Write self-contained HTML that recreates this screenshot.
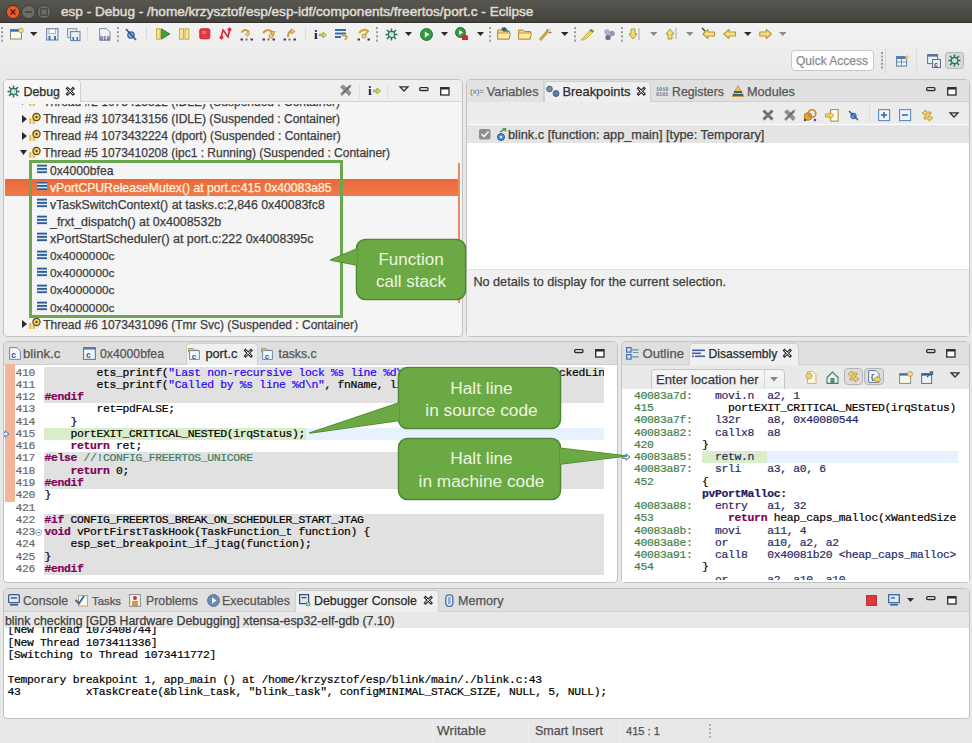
<!DOCTYPE html><html><head><meta charset="utf-8"><style>
html,body{margin:0;padding:0}
body{width:972px;height:743px;overflow:hidden;position:relative;background:#e8e8e8;font-family:"Liberation Sans",sans-serif}
.a{position:absolute;box-sizing:border-box}
.t{position:absolute;white-space:pre;font-family:"Liberation Sans",sans-serif;-webkit-text-stroke:0.25px currentColor}
.m{position:absolute;white-space:pre;font-family:"Liberation Mono",monospace;-webkit-text-stroke:0.2px currentColor}
.k{color:#7f0055;font-weight:bold}
.s{color:#2a00ff}
.cm{color:#3f7f5f}
svg{overflow:visible}
</style></head><body>
<div class="a" style="left:0px;top:0px;width:972px;height:23px;background:linear-gradient(#57564f,#4a4944 70%,#43423d);border-bottom:1px solid #33322e"></div>
<svg class="a" style="left:5px;top:4px" width="50" height="16" viewBox="0 0 50 16">
<circle cx="8" cy="8" r="6.6" fill="#e9592c" stroke="#3a2a20" stroke-width="0.8"/>
<path d="M5.6 5.6L10.4 10.4M10.4 5.6L5.6 10.4" stroke="#5a1a08" stroke-width="1.4"/>
<circle cx="23.5" cy="8" r="6.6" fill="#6e6c67" stroke="#3a3935" stroke-width="0.8"/>
<rect x="20" y="7.3" width="7" height="1.6" fill="#4a4843"/>
<circle cx="39" cy="8" r="6.6" fill="#6e6c67" stroke="#3a3935" stroke-width="0.8"/>
<rect x="35.8" y="4.8" width="6.4" height="6.4" fill="none" stroke="#4a4843" stroke-width="1.4"/>
</svg>
<div class="t" style="left:61px;top:4.00px;line-height:16px;font-size:13.58px;color:#dfdbd2;-webkit-text-stroke:0.5px #dfdbd2">esp - Debug - /home/krzysztof/esp/esp-idf/components/freertos/port.c - Eclipse</div>
<div class="a" style="left:0px;top:23px;width:972px;height:56px;background:linear-gradient(#f2f2f2,#ececec 60%,#e8e8e8)"></div>
<svg class="a" style="left:1px;top:27px" width="2" height="17" viewBox="0 0 2 17"><rect x="0" y="0.0" width="2" height="2" fill="#9a9a9a"/><rect x="0" y="4.2" width="2" height="2" fill="#9a9a9a"/><rect x="0" y="8.4" width="2" height="2" fill="#9a9a9a"/><rect x="0" y="12.6" width="2" height="2" fill="#9a9a9a"/></svg>
<svg class="a" style="left:10px;top:28px" width="14" height="12" viewBox="0 0 14 12"><rect x="0.5" y="1.5" width="11" height="9.5" fill="#fbf8ea" stroke="#8a8a80" stroke-width="1"/><rect x="0.5" y="1.5" width="11" height="2.2" fill="#3a6fb0"/><circle cx="11" cy="2.5" r="2.3" fill="#f5e08a" stroke="#b09a40" stroke-width="0.8"/></svg>
<svg class="a" style="left:30px;top:32px" width="7.5" height="4" viewBox="0 0 7.5 4"><path d="M0 0H7.5L3.75 4Z" fill="#2a2a2a"/></svg>
<svg class="a" style="left:46px;top:27.5px" width="13" height="13" viewBox="0 0 13 13"><rect x="0.6" y="0.6" width="11.4" height="11.4" fill="#e6eef8" stroke="#6f86a8" stroke-width="1.1"/><rect x="3" y="1" width="6.5" height="4.5" fill="#fff" stroke="#8aa0c0" stroke-width="0.8"/><rect x="2.5" y="8" width="2" height="4" fill="#4f6f9f"/><rect x="8" y="8" width="2" height="4" fill="#4f6f9f"/></svg>
<svg class="a" style="left:67px;top:27.5px" width="14" height="13" viewBox="0 0 14 13"><rect x="0.6" y="0.6" width="9" height="9" fill="#e0e6ee" stroke="#8a98ae" stroke-width="1"/><rect x="3.6" y="3.6" width="9.4" height="9" fill="#e6eef8" stroke="#6f86a8" stroke-width="1.1"/><rect x="5.5" y="9" width="1.6" height="3.5" fill="#4f6f9f"/><rect x="9.5" y="9" width="1.6" height="3.5" fill="#4f6f9f"/></svg>
<div class="a" style="left:87px;top:27px;width:1px;height:14px;background:#dcdcdc"></div>
<svg class="a" style="left:99px;top:27.5px" width="12" height="13" viewBox="0 0 12 13"><path d="M0.6 0.6H7.5L11 4V12.4H0.6Z" fill="#eef3fa" stroke="#7f90a8" stroke-width="1"/><text x="0.8" y="11.5" font-family="Liberation Mono" font-size="5.5" font-weight="bold" fill="#2f4f7f">010</text></svg>
<svg class="a" style="left:117px;top:27px" width="2" height="17" viewBox="0 0 2 17"><rect x="0" y="0.0" width="2" height="2" fill="#9a9a9a"/><rect x="0" y="4.2" width="2" height="2" fill="#9a9a9a"/><rect x="0" y="8.4" width="2" height="2" fill="#9a9a9a"/><rect x="0" y="12.6" width="2" height="2" fill="#9a9a9a"/></svg>
<svg class="a" style="left:125px;top:27.5px" width="12" height="13" viewBox="0 0 12 13"><circle cx="6" cy="7" r="3.2" fill="#8fb0d8" stroke="#3a64a0" stroke-width="1.3"/><path d="M1 1L11 12" stroke="#2a5a9a" stroke-width="1.6"/></svg>
<div class="a" style="left:145.5px;top:27px;width:1px;height:14px;background:#dcdcdc"></div>
<svg class="a" style="left:156px;top:28px" width="15" height="12" viewBox="0 0 15 12"><rect x="0.6" y="0.8" width="3.6" height="10.4" fill="#f5e9a0" stroke="#c9a83a" stroke-width="1"/><path d="M5.5 0.8L14 6L5.5 11.2Z" fill="#3fa040" stroke="#2a7a30" stroke-width="0.8"/></svg>
<svg class="a" style="left:179px;top:28px" width="11" height="12" viewBox="0 0 11 12"><rect x="0.6" y="0.8" width="3.8" height="10.4" fill="#f5e9a0" stroke="#c9a83a" stroke-width="1"/><rect x="6" y="0.8" width="3.8" height="10.4" fill="#f5e9a0" stroke="#c9a83a" stroke-width="1"/></svg>
<svg class="a" style="left:199px;top:28px" width="12" height="12" viewBox="0 0 12 12"><rect x="0.8" y="0.8" width="10" height="10" rx="1.5" fill="#e03a3e" stroke="#c02a2e" stroke-width="1"/><rect x="3" y="3" width="4" height="3" fill="#f06a6e"/></svg>
<svg class="a" style="left:219px;top:27px" width="13" height="13" viewBox="0 0 13 13"><path d="M2 11L4 3L9 10L11 2" fill="none" stroke="#c8283a" stroke-width="1.6"/><circle cx="2.5" cy="10.5" r="2" fill="#d83848"/><circle cx="10.5" cy="2.5" r="2" fill="#d83848"/><circle cx="4.5" cy="4" r="1.3" fill="#d83848"/></svg>
<svg class="a" style="left:240px;top:28px" width="14" height="13" viewBox="0 0 14 13"><path d="M1.5 4.5Q5 0 8.5 3.5L7 6.5" fill="none" stroke="#c8a040" stroke-width="2"/><path d="M5 5.5L7.5 8.5L10 5" fill="#f0d070" stroke="#b08a30" stroke-width="0.8"/><rect x="0.5" y="10.5" width="2.5" height="2" fill="#404040"/><rect x="10.5" y="10.5" width="2.5" height="2" fill="#404040"/><rect x="5.5" y="10.5" width="2" height="2" fill="#707070"/></svg>
<svg class="a" style="left:262px;top:28px" width="14" height="13" viewBox="0 0 14 13"><path d="M1 5Q6 -1 11 5" fill="none" stroke="#c8a040" stroke-width="2"/><path d="M8.5 4L11 7.5L13 3.5Z" fill="#f0d070" stroke="#b08a30" stroke-width="0.8"/><circle cx="9" cy="8" r="2" fill="#f0d070" stroke="#b08a30" stroke-width="0.8"/><rect x="0.5" y="10.5" width="2.5" height="2" fill="#404040"/><rect x="10.5" y="10.5" width="2.5" height="2" fill="#404040"/><rect x="5.5" y="10.5" width="2" height="2" fill="#707070"/></svg>
<svg class="a" style="left:283px;top:28px" width="14" height="13" viewBox="0 0 14 13"><path d="M5 9Q5 3 9 3" fill="none" stroke="#c8a040" stroke-width="2"/><path d="M8 1L12 3.5L8 6Z" fill="#f0d070" stroke="#b08a30" stroke-width="0.8"/><rect x="0.5" y="10.5" width="2.5" height="2" fill="#404040"/><rect x="10.5" y="10.5" width="2.5" height="2" fill="#404040"/><rect x="5.5" y="10.5" width="2" height="2" fill="#707070"/></svg>
<div class="a" style="left:305px;top:27px;width:1px;height:14px;background:#dcdcdc"></div>
<svg class="a" style="left:314px;top:28px" width="13" height="12" viewBox="0 0 13 12"><text x="0" y="11" font-family="Liberation Serif" font-size="13" font-weight="bold" fill="#101030">i</text><path d="M5.5 6H9V4L12.5 7L9 10V8H5.5Z" fill="#e8d040" stroke="#8a9a30" stroke-width="0.7"/></svg>
<svg class="a" style="left:335px;top:28px" width="14" height="13" viewBox="0 0 14 13"><rect x="0" y="1" width="11" height="2" fill="#3a6ab0"/><rect x="0" y="4.5" width="11" height="2" fill="#3a6ab0"/><rect x="0" y="8" width="6" height="2" fill="#3a6ab0"/><path d="M7 8Q10 6 12 9L10 12" fill="none" stroke="#d0a838" stroke-width="2"/></svg>
<svg class="a" style="left:357px;top:28px" width="14" height="13" viewBox="0 0 14 13"><path d="M2 5Q6 0 11 3L8 7" fill="none" stroke="#d0a838" stroke-width="2"/><circle cx="7" cy="8" r="2" fill="#f0d070" stroke="#b08a30" stroke-width="0.8"/><rect x="0.5" y="10.5" width="2.5" height="2" fill="#404040"/><rect x="10.5" y="10.5" width="2.5" height="2" fill="#404040"/></svg>
<svg class="a" style="left:376px;top:27px" width="2" height="17" viewBox="0 0 2 17"><rect x="0" y="0.0" width="2" height="2" fill="#9a9a9a"/><rect x="0" y="4.2" width="2" height="2" fill="#9a9a9a"/><rect x="0" y="8.4" width="2" height="2" fill="#9a9a9a"/><rect x="0" y="12.6" width="2" height="2" fill="#9a9a9a"/></svg>
<svg class="a" style="left:385px;top:28px" width="13" height="13" viewBox="0 0 13 13"><path d="M6.5 0.5V12.5M0.5 6.5H12.5M2 2L11 11M11 2L2 11" stroke="#2f6f5f" stroke-width="1.5"/><circle cx="6.5" cy="6.5" r="3.2" fill="#bfe8d8" stroke="#2f6f5f" stroke-width="1.2"/></svg>
<svg class="a" style="left:404.5px;top:32px" width="7" height="4" viewBox="0 0 7 4"><path d="M0 0H7L3.5 4Z" fill="#2a2a2a"/></svg>
<svg class="a" style="left:419.5px;top:27.5px" width="13" height="13" viewBox="0 0 13 13"><circle cx="6.5" cy="6.5" r="6" fill="#2f9a40" stroke="#1f6a2a" stroke-width="0.9"/><path d="M4.8 3.5L9.5 6.5L4.8 9.5Z" fill="#fff"/></svg>
<svg class="a" style="left:440.5px;top:32px" width="7" height="4" viewBox="0 0 7 4"><path d="M0 0H7L3.5 4Z" fill="#2a2a2a"/></svg>
<svg class="a" style="left:455px;top:27px" width="15" height="14" viewBox="0 0 15 14"><circle cx="5.5" cy="5.5" r="5" fill="#2f9a40" stroke="#1f6a2a" stroke-width="0.9"/><path d="M4 3L8 5.5L4 8Z" fill="#fff"/><path d="M7 9Q10 6.5 13 9V13H7Z" fill="#d02a2a"/></svg>
<svg class="a" style="left:477px;top:32px" width="7" height="4" viewBox="0 0 7 4"><path d="M0 0H7L3.5 4Z" fill="#2a2a2a"/></svg>
<svg class="a" style="left:489px;top:27px" width="2" height="17" viewBox="0 0 2 17"><rect x="0" y="0.0" width="2" height="2" fill="#9a9a9a"/><rect x="0" y="4.2" width="2" height="2" fill="#9a9a9a"/><rect x="0" y="8.4" width="2" height="2" fill="#9a9a9a"/><rect x="0" y="12.6" width="2" height="2" fill="#9a9a9a"/></svg>
<svg class="a" style="left:497px;top:27px" width="15" height="13" viewBox="0 0 15 13"><circle cx="7" cy="3" r="2.8" fill="#3a5a7a"/><circle cx="10" cy="5.5" r="2.5" fill="#3a8a4a"/><path d="M0.6 3H5L6.5 4.5H12.5V12H0.6Z" fill="#f5d680" stroke="#b08a30" stroke-width="1"/><path d="M0.6 6H13.5L12 12H0.6Z" fill="#fbe9a8" stroke="#b08a30" stroke-width="0.8"/></svg>
<svg class="a" style="left:518px;top:27px" width="15" height="13" viewBox="0 0 15 13"><path d="M0.6 3H5L6.5 4.5H12.5V12H0.6Z" fill="#f5d680" stroke="#b08a30" stroke-width="1"/><path d="M0.6 6H13.5L12 12H0.6Z" fill="#fbe9a8" stroke="#b08a30" stroke-width="0.8"/></svg>
<svg class="a" style="left:539px;top:27.5px" width="14" height="13" viewBox="0 0 14 13"><path d="M1 12L9 3" stroke="#c8a050" stroke-width="3"/><path d="M8 1.5L12 5" stroke="#8a7050" stroke-width="2"/><rect x="9" y="1" width="3" height="3" fill="#e8d8a0"/></svg>
<svg class="a" style="left:560.5px;top:32px" width="7.5" height="4" viewBox="0 0 7.5 4"><path d="M0 0H7.5L3.75 4Z" fill="#2a2a2a"/></svg>
<svg class="a" style="left:573.5px;top:27px" width="2" height="17" viewBox="0 0 2 17"><rect x="0" y="0.0" width="2" height="2" fill="#9a9a9a"/><rect x="0" y="4.2" width="2" height="2" fill="#9a9a9a"/><rect x="0" y="8.4" width="2" height="2" fill="#9a9a9a"/><rect x="0" y="12.6" width="2" height="2" fill="#9a9a9a"/></svg>
<svg class="a" style="left:580px;top:27.5px" width="15" height="13" viewBox="0 0 15 13"><path d="M1 12L4 9L11 1L14 3L7 10L3 12Z" fill="#f2d850" stroke="#b8a030" stroke-width="0.8"/><path d="M10 2L13 4" stroke="#6a6a3a" stroke-width="1.5"/></svg>
<svg class="a" style="left:603px;top:27.5px" width="13" height="13" viewBox="0 0 13 13"><circle cx="4" cy="4" r="2.7" fill="#a8b0c0"/><circle cx="9" cy="5.5" r="2.7" fill="#9098b0"/><circle cx="5" cy="9.5" r="2.7" fill="#6a7290"/></svg>
<svg class="a" style="left:621px;top:27px" width="2" height="17" viewBox="0 0 2 17"><rect x="0" y="0.0" width="2" height="2" fill="#9a9a9a"/><rect x="0" y="4.2" width="2" height="2" fill="#9a9a9a"/><rect x="0" y="8.4" width="2" height="2" fill="#9a9a9a"/><rect x="0" y="12.6" width="2" height="2" fill="#9a9a9a"/></svg>
<svg class="a" style="left:628px;top:27.5px" width="13" height="13" viewBox="0 0 13 13"><path d="M3 1H7V6H9L5 11L1 6H3Z" fill="#f2df70" stroke="#b09030" stroke-width="0.9"/><rect x="10.5" y="0" width="1" height="12" fill="#aaa"/></svg>
<svg class="a" style="left:650px;top:32px" width="7.5" height="4" viewBox="0 0 7.5 4"><path d="M0 0H7.5L3.75 4Z" fill="#8a8a8a"/></svg>
<svg class="a" style="left:665px;top:27.5px" width="13" height="13" viewBox="0 0 13 13"><path d="M5 1L9 6H7V11H3V6H1Z" fill="#f2df70" stroke="#b09030" stroke-width="0.9"/><rect x="10.5" y="0" width="1" height="11" fill="#aaa"/></svg>
<svg class="a" style="left:686px;top:32px" width="7.5" height="4" viewBox="0 0 7.5 4"><path d="M0 0H7.5L3.75 4Z" fill="#8a8a8a"/></svg>
<svg class="a" style="left:702px;top:28px" width="14" height="12" viewBox="0 0 14 12"><path d="M0.8 6L6 1.5V4H12.5V8H6V10.5Z" fill="#f5e08a" stroke="#b8982e" stroke-width="1.1" stroke-linejoin="round"/><path d="M0 0L3 3" stroke="#333" stroke-width="1.2"/></svg>
<svg class="a" style="left:723px;top:28px" width="14" height="12" viewBox="0 0 14 12"><path d="M0.8 6L6 1.5V4H12.5V8H6V10.5Z" fill="#f5e08a" stroke="#b8982e" stroke-width="1.1" stroke-linejoin="round"/></svg>
<svg class="a" style="left:743.5px;top:32px" width="7.5" height="4" viewBox="0 0 7.5 4"><path d="M0 0H7.5L3.75 4Z" fill="#2a2a2a"/></svg>
<svg class="a" style="left:759px;top:28px" width="14" height="12" viewBox="0 0 14 12"><path d="M12.5 6L7.3 1.5V4H0.8V8H7.3V10.5Z" fill="#f5e08a" stroke="#b8982e" stroke-width="1.1" stroke-linejoin="round"/></svg>
<svg class="a" style="left:779px;top:32px" width="7.5" height="4" viewBox="0 0 7.5 4"><path d="M0 0H7.5L3.75 4Z" fill="#8a8a8a"/></svg>
<svg class="a" style="left:895.5px;top:54px" width="14" height="13" viewBox="0 0 14 13"><rect x="0.6" y="2.6" width="10" height="9.5" fill="#eef3fa" stroke="#5a7aa8" stroke-width="1"/><rect x="0.6" y="2.6" width="10" height="2.3" fill="#4a74b0"/><path d="M0.6 8H10.6M5.5 5V12" stroke="#5a7aa8" stroke-width="0.8"/><path d="M11 0L12 2.5L14 3L12 4L11 6.5L10 4L8 3L10 2.5Z" fill="#f0d040"/></svg>
<svg class="a" style="left:927px;top:53.5px" width="14" height="14" viewBox="0 0 14 14"><rect x="0.6" y="0.6" width="10" height="9" fill="#eef3fa" stroke="#5a7090" stroke-width="1"/><rect x="0.6" y="0.6" width="10" height="2" fill="#5a7090"/><rect x="5.5" y="5.5" width="8" height="8" fill="#e8eef6" stroke="#5a7090" stroke-width="1"/><text x="7" y="12.5" font-family="Liberation Sans" font-size="7" font-weight="bold" fill="#3a5070">c</text></svg>
<div class="a" style="left:791px;top:49.5px;width:83px;height:21px;background:#fff;border:1px solid #c9c9c9;border-radius:4px"></div>
<div class="t" style="left:796px;top:52.80px;line-height:16px;font-size:12.00px;color:#8c8c8c;">Quick Access</div>
<svg class="a" style="left:881px;top:52px" width="2" height="19" viewBox="0 0 2 19"><rect x="0" y="0.0" width="2" height="2" fill="#9a9a9a"/><rect x="0" y="3.6" width="2" height="2" fill="#9a9a9a"/><rect x="0" y="7.2" width="2" height="2" fill="#9a9a9a"/><rect x="0" y="10.8" width="2" height="2" fill="#9a9a9a"/><rect x="0" y="14.4" width="2" height="2" fill="#9a9a9a"/></svg>
<div class="a" style="left:885px;top:48px;width:1px;height:26px;background:#d6d6d6"></div>
<div class="a" style="left:916px;top:48px;width:1px;height:26px;background:#dedede"></div>
<div class="a" style="left:945px;top:52px;width:19px;height:17px;background:#d8d8d8;border:1px solid #b8b8b8;border-radius:3px"></div>
<svg class="a" style="left:948px;top:54px" width="13" height="13" viewBox="0 0 13 13"><path d="M6.5 0.5V12.5M0.5 6.5H12.5M2 2L11 11M11 2L2 11" stroke="#2f6f5f" stroke-width="1.5"/><circle cx="6.5" cy="6.5" r="3.2" fill="#bfe8d8" stroke="#2f6f5f" stroke-width="1.2"/></svg>
<div class="a" style="left:3px;top:79px;width:460px;height:258px;background:#f5f5f5;border:1px solid #c2c2c2;border-radius:5px 5px 4px 4px;overflow:hidden"></div>
<div class="a" style="left:4px;top:80px;width:458px;height:22px;background:#efefef;border-radius:4px 4px 0 0"></div>
<div class="a" style="left:4px;top:101px;width:458px;height:1px;background:#d4d4d4"></div>
<div class="a" style="left:4px;top:80px;width:77px;height:22px;background:#f7f7f7;border-right:1px solid #d0d0d0;border-radius:4px 4px 0 0"></div>
<div class="t" style="left:23.5px;top:84.00px;line-height:16px;font-size:12.35px;color:#2a2a2a;">Debug</div>
<div class="a" style="left:466px;top:79px;width:504px;height:258px;background:#ffffff;border:1px solid #c2c2c2;border-radius:5px 5px 4px 4px;overflow:hidden"></div>
<div class="a" style="left:467px;top:80px;width:502px;height:22px;background:#e0e0e0;border-radius:4px 4px 0 0"></div>
<div class="a" style="left:467px;top:101px;width:502px;height:1px;background:#cfcfcf"></div>
<div class="a" style="left:467px;top:80px;width:77px;height:22px;background:#e2e2e2;border-right:1px solid #cfcfcf;border-radius:4px 0 0 0"></div>
<div class="a" style="left:544px;top:80.5px;width:107px;height:22px;background:#efefef;border:1px solid #cfcfcf;border-bottom:none;border-radius:4px 4px 0 0"></div>
<div class="t" style="left:486.7px;top:84.00px;line-height:16px;font-size:12.65px;color:#555555;">Variables</div>
<div class="t" style="left:562.5px;top:84.00px;line-height:16px;font-size:12.86px;color:#2a2a2a;">Breakpoints</div>
<div class="t" style="left:672px;top:84.00px;line-height:16px;font-size:12.31px;color:#555555;">Registers</div>
<div class="t" style="left:747px;top:84.00px;line-height:16px;font-size:12.70px;color:#555555;">Modules</div>
<div class="a" style="left:467px;top:102px;width:502px;height:22px;background:#ececec"></div>
<div class="a" style="left:467px;top:124.5px;width:502px;height:18px;background:#e4e4e4"></div>
<div class="a" style="left:467px;top:142.5px;width:502px;height:127px;background:#ffffff"></div>
<div class="a" style="left:467px;top:269px;width:502px;height:67px;background:#f0f0f0;border-top:1px solid #e2e2e2"></div>
<div class="t" style="left:473.4px;top:274.40px;line-height:16px;font-size:12.66px;color:#3c3c3c;">No details to display for the current selection.</div>
<div class="t" style="left:508px;top:126.50px;line-height:16px;font-size:12.76px;color:#3c3c3c;">blink.c [function: app_main] [type: Temporary]</div>
<div class="a" style="left:3px;top:341px;width:615px;height:242px;background:#ffffff;border:1px solid #c2c2c2;border-radius:5px 5px 4px 4px;overflow:hidden"></div>
<div class="a" style="left:4px;top:342px;width:613px;height:22px;background:#dfdfdf;border-radius:4px 4px 0 0"></div>
<div class="a" style="left:4px;top:363.5px;width:613px;height:1px;background:#cfcfcf"></div>
<div class="a" style="left:185.5px;top:342.5px;width:72px;height:22px;background:#f0f0f0;border:1px solid #cfcfcf;border-bottom:none;border-radius:4px 4px 0 0"></div>
<div class="t" style="left:23px;top:345.50px;line-height:16px;font-size:13.19px;color:#555555;">blink.c</div>
<div class="t" style="left:100px;top:345.50px;line-height:16px;font-size:12.24px;color:#555555;">0x4000bfea</div>
<div class="t" style="left:205.4px;top:345.50px;line-height:16px;font-size:12.79px;color:#2a2a2a;">port.c</div>
<div class="t" style="left:278.6px;top:345.50px;line-height:16px;font-size:12.21px;color:#555555;">tasks.c</div>
<div class="a" style="left:621px;top:341px;width:349px;height:242px;background:#ffffff;border:1px solid #c2c2c2;border-radius:5px 5px 4px 4px;overflow:hidden"></div>
<div class="a" style="left:622px;top:342px;width:347px;height:22px;background:#dfdfdf;border-radius:4px 4px 0 0"></div>
<div class="a" style="left:622px;top:363.5px;width:347px;height:1px;background:#cfcfcf"></div>
<div class="a" style="left:688.5px;top:342.5px;width:110px;height:22px;background:#f0f0f0;border:1px solid #cfcfcf;border-bottom:none;border-radius:4px 4px 0 0"></div>
<div class="t" style="left:642.5px;top:345.50px;line-height:16px;font-size:13.10px;color:#555555;">Outline</div>
<div class="t" style="left:708.6px;top:345.50px;line-height:16px;font-size:12.12px;color:#2a2a2a;">Disassembly</div>
<div class="a" style="left:622px;top:364.5px;width:347px;height:24px;background:#e9e9e9"></div>
<div class="a" style="left:650.5px;top:368.5px;width:134.5px;height:26px;background:linear-gradient(#f6f6f6,#ececec);border:1px solid #c6c6c6;border-radius:4px"></div>
<div class="a" style="left:652px;top:370px;width:107px;height:19px;overflow:hidden">
<div class="t" style="left:4px;top:1.50px;line-height:16px;font-size:13.10px;color:#3a3a3a;">Enter location here</div>
</div>
<div class="a" style="left:763.5px;top:370px;width:1px;height:19px;background:#d8d8d8"></div>
<svg class="a" style="left:770px;top:377px" width="8" height="4.5" viewBox="0 0 8 4.5"><path d="M0 0H8L4.0 4.5Z" fill="#8a8a8a"/></svg>
<div class="a" style="left:622px;top:389px;width:347px;height:193px;background:#ffffff"></div>
<div class="a" style="left:3px;top:588px;width:967px;height:131px;background:#ffffff;border:1px solid #c2c2c2;border-radius:5px 5px 4px 4px;overflow:hidden"></div>
<div class="a" style="left:4px;top:589px;width:965px;height:22px;background:#dfdfdf;border-radius:4px 4px 0 0"></div>
<div class="a" style="left:4px;top:610.5px;width:965px;height:1px;background:#cfcfcf"></div>
<div class="a" style="left:295px;top:589.5px;width:144px;height:22px;background:#f0f0f0;border:1px solid #cfcfcf;border-bottom:none;border-radius:4px 4px 0 0"></div>
<div class="t" style="left:23px;top:592.80px;line-height:16px;font-size:12.26px;color:#555555;">Console</div>
<div class="t" style="left:92px;top:592.80px;line-height:16px;font-size:11.35px;color:#555555;">Tasks</div>
<div class="t" style="left:146px;top:592.80px;line-height:16px;font-size:12.31px;color:#555555;">Problems</div>
<div class="t" style="left:222px;top:592.80px;line-height:16px;font-size:12.48px;color:#555555;">Executables</div>
<div class="t" style="left:314px;top:592.80px;line-height:16px;font-size:12.35px;color:#2a2a2a;">Debugger Console</div>
<div class="t" style="left:458px;top:592.80px;line-height:16px;font-size:12.60px;color:#555555;">Memory</div>
<div class="a" style="left:4px;top:611.5px;width:965px;height:16px;background:#e8e8e8"></div>
<div class="t" style="left:5px;top:612.50px;line-height:16px;font-size:12.35px;color:#3a3a3a;">blink checking [GDB Hardware Debugging] xtensa-esp32-elf-gdb (7.10)</div>
<svg class="a" style="left:7px;top:85px" width="13" height="13" viewBox="0 0 13 13"><path d="M6.5 0.5V12.5M0.5 6.5H12.5M2 2L11 11M11 2L2 11" stroke="#2f6f5f" stroke-width="1.5"/><circle cx="6.5" cy="6.5" r="3.2" fill="#bfe8d8" stroke="#2f6f5f" stroke-width="1.2"/></svg>
<svg class="a" style="left:66px;top:86.5px" width="9" height="9" viewBox="0 0 9 9"><path d="M1.5 1.5L7 7M7 1.5L1.5 7" stroke="#2a2a2a" stroke-width="2.8" stroke-linecap="square"/><path d="M1.6 1.6L6.9 6.9M6.9 1.6L1.6 6.9" stroke="#fafafa" stroke-width="1.0"/></svg>
<svg class="a" style="left:338.5px;top:84px" width="13" height="13" viewBox="0 0 13 13"><path d="M2 2L11 11M11 2L2 11" stroke="#8a8a8a" stroke-width="2.6"/><path d="M4 1L12 9M12 1L4 9" stroke="#5a5a5a" stroke-width="1.2" opacity="0.7"/></svg>
<div class="a" style="left:359px;top:83px;width:1px;height:16px;background:#e0e0e0"></div>
<svg class="a" style="left:368px;top:84px" width="14" height="12" viewBox="0 0 14 12"><text x="0" y="11" font-family="Liberation Serif" font-size="13" font-weight="bold" fill="#1a1a4a">i</text><path d="M5.5 6H9V4L12.5 7L9 10V8H5.5Z" fill="#e8d040" stroke="#8a9a30" stroke-width="0.7"/></svg>
<div class="a" style="left:387px;top:83px;width:1px;height:16px;background:#e0e0e0"></div>
<svg class="a" style="left:399px;top:86px" width="10" height="6" viewBox="0 0 10 6"><path d="M1 0.8H9L5 5Z" fill="none" stroke="#333" stroke-width="1.3"/></svg>
<svg class="a" style="left:419px;top:86.5px" width="10" height="5" viewBox="0 0 10 5"><rect x="0.7" y="0.7" width="8.3" height="2.8" rx="1" fill="#fff" stroke="#2a2a2a" stroke-width="1.3"/></svg>
<svg class="a" style="left:440px;top:86.5px" width="10" height="9" viewBox="0 0 10 9"><rect x="0.7" y="0.7" width="8.3" height="7.3" fill="#fff" stroke="#2a2a2a" stroke-width="1.3"/><rect x="1" y="1" width="7.8" height="1.5" fill="#2a2a2a"/></svg>
<svg class="a" style="left:469.5px;top:86px" width="15" height="10" viewBox="0 0 15 10"><text x="0" y="8" font-family="Liberation Sans" font-size="8" fill="#5a6a8a">(x)=</text></svg>
<svg class="a" style="left:546px;top:85px" width="14" height="12" viewBox="0 0 14 12"><circle cx="3.5" cy="4" r="2.8" fill="#6f8faf" stroke="#3f5f7f" stroke-width="1"/><circle cx="10" cy="8.5" r="2.9" fill="#5f7f9f" stroke="#3f5f7f" stroke-width="1"/></svg>
<svg class="a" style="left:636.5px;top:86.5px" width="9" height="9" viewBox="0 0 9 9"><path d="M1.5 1.5L7 7M7 1.5L1.5 7" stroke="#2a2a2a" stroke-width="2.8" stroke-linecap="square"/><path d="M1.6 1.6L6.9 6.9M6.9 1.6L1.6 6.9" stroke="#fafafa" stroke-width="1.0"/></svg>
<svg class="a" style="left:655.5px;top:86px" width="13" height="10" viewBox="0 0 13 10"><text x="0" y="4.5" font-family="Liberation Mono" font-size="5.2" font-weight="bold" fill="#6a7a9a">1010</text><text x="0" y="9.5" font-family="Liberation Mono" font-size="5.2" font-weight="bold" fill="#6a7a9a">0101</text></svg>
<svg class="a" style="left:730.5px;top:85px" width="14" height="12" viewBox="0 0 14 12"><path d="M7 0.5L13 11.5H1Z" fill="#f0c060" stroke="#c09030" stroke-width="0.8"/><rect x="3" y="6" width="8" height="2" fill="#3a6a5a"/><rect x="2" y="9" width="10" height="2" fill="#3a6a5a"/></svg>
<svg class="a" style="left:926px;top:86.5px" width="10" height="5" viewBox="0 0 10 5"><rect x="0.7" y="0.7" width="8.3" height="2.8" rx="1" fill="#fff" stroke="#2a2a2a" stroke-width="1.3"/></svg>
<svg class="a" style="left:947px;top:86.5px" width="10" height="9" viewBox="0 0 10 9"><rect x="0.7" y="0.7" width="8.3" height="7.3" fill="#fff" stroke="#2a2a2a" stroke-width="1.3"/><rect x="1" y="1" width="7.8" height="1.5" fill="#2a2a2a"/></svg>
<svg class="a" style="left:762px;top:109px" width="12" height="12" viewBox="0 0 12 12"><path d="M1.5 1.5L10.5 10.5M10.5 1.5L1.5 10.5" stroke="#707070" stroke-width="3"/></svg>
<svg class="a" style="left:783px;top:108.5px" width="13" height="13" viewBox="0 0 13 13"><path d="M2 2L11 11M11 2L2 11" stroke="#8a8a8a" stroke-width="2.6"/><path d="M4 1L12 9M12 1L4 9" stroke="#5a5a5a" stroke-width="1.2" opacity="0.7"/></svg>
<svg class="a" style="left:803px;top:108.5px" width="14" height="13" viewBox="0 0 14 13"><circle cx="5" cy="7.5" r="3.8" fill="#e8a838" stroke="#b07828" stroke-width="1"/><circle cx="9" cy="4.5" r="3.8" fill="none" stroke="#c88828" stroke-width="1.6"/><circle cx="2" cy="11" r="1.3" fill="#2a5a9a"/><circle cx="12" cy="11" r="1.3" fill="#2a5a9a"/></svg>
<svg class="a" style="left:824.5px;top:108.5px" width="14" height="13" viewBox="0 0 14 13"><rect x="5.6" y="0.6" width="7.5" height="11.5" fill="#fffbe8" stroke="#a08a50" stroke-width="1"/><path d="M0.5 5H5V3L9 6.5L5 10V8H0.5Z" fill="#f5d860" stroke="#b09030" stroke-width="0.8"/></svg>
<svg class="a" style="left:847.5px;top:110px" width="11" height="11" viewBox="0 0 11 11"><circle cx="5.5" cy="6" r="2.6" fill="#8fb0d8" stroke="#3a64a0" stroke-width="1.1"/><path d="M1 1L10 10" stroke="#2a5a9a" stroke-width="1.4"/></svg>
<div class="a" style="left:869px;top:106px;width:1px;height:16px;background:#dadada"></div>
<svg class="a" style="left:878px;top:109px" width="13" height="13" viewBox="0 0 13 13"><rect x="0.6" y="0.6" width="11" height="11" fill="#eef5fc" stroke="#5a8ac0" stroke-width="1.1"/><path d="M3 6H9" stroke="#3a6aa8" stroke-width="1.6"/><path d="M6 3V9" stroke="#3a6aa8" stroke-width="1.6"/></svg>
<svg class="a" style="left:899px;top:109px" width="13" height="13" viewBox="0 0 13 13"><rect x="0.6" y="0.6" width="11" height="11" fill="#eef5fc" stroke="#5a8ac0" stroke-width="1.1"/><path d="M3 6H9" stroke="#3a6aa8" stroke-width="1.6"/></svg>
<svg class="a" style="left:920.5px;top:109px" width="13" height="13" viewBox="0 0 13 13"><path d="M1 4L5 1V3H10V5H5V7Z" fill="#f5d860" stroke="#b89030" stroke-width="0.8"/><path d="M12 9L8 6V8H3V10H8V12Z" fill="#f5d860" stroke="#b89030" stroke-width="0.8"/></svg>
<svg class="a" style="left:949px;top:112px" width="10" height="6" viewBox="0 0 10 6"><path d="M1 0.8H9L5 5Z" fill="none" stroke="#333" stroke-width="1.3"/></svg>
<svg class="a" style="left:479px;top:128.5px" width="12" height="11" viewBox="0 0 12 11"><rect x="0" y="0" width="11.5" height="10.5" rx="2" fill="#8e8e8e"/><path d="M2.5 5L5 7.5L9.5 2.5" fill="none" stroke="#f4f4f4" stroke-width="1.6"/></svg>
<svg class="a" style="left:497px;top:128px" width="10" height="14" viewBox="0 0 10 14"><circle cx="4" cy="9" r="3.5" fill="#4a8ad8" stroke="#2a5a9a" stroke-width="1"/><circle cx="4" cy="9" r="1.3" fill="#dbe9f7"/><path d="M3 4L8 1M5.5 1H8.5V3.5" fill="none" stroke="#2a9a4a" stroke-width="1.4"/></svg>
<svg class="a" style="left:9px;top:347px" width="12" height="13" viewBox="0 0 12 13"><path d="M0.6 0.6H8L11.4 4V12.4H0.6Z" fill="#f2f8ff" stroke="#6a8ab0" stroke-width="1"/><text x="2.3" y="11" font-family="Liberation Sans" font-size="8.5" font-weight="bold" fill="#2a5a9a">c</text></svg>
<svg class="a" style="left:83px;top:347px" width="13" height="13" viewBox="0 0 13 13"><rect x="0.6" y="0.6" width="11.8" height="11.8" fill="#f2f8ff" stroke="#5a7aa8" stroke-width="1.1"/><rect x="0.6" y="0.6" width="11.8" height="2" fill="#5a7aa8"/><text x="3" y="11" font-family="Liberation Sans" font-size="8.5" font-weight="bold" fill="#2a5a9a">c</text></svg>
<svg class="a" style="left:187.5px;top:347px" width="13" height="13" viewBox="0 0 13 13"><path d="M0.5 1.5H5L6 3H10V5H0.5Z" fill="#e8c860" stroke="#b89030" stroke-width="0.8"/><path d="M1.6 3.6H11.4V12.4H1.6Z" fill="#f2f8ff" stroke="#6a8ab0" stroke-width="1"/><text x="3.8" y="11.5" font-family="Liberation Sans" font-size="8" font-weight="bold" fill="#2a5a9a">c</text></svg>
<svg class="a" style="left:243.5px;top:349px" width="9" height="9" viewBox="0 0 9 9"><path d="M1.5 1.5L7 7M7 1.5L1.5 7" stroke="#2a2a2a" stroke-width="2.8" stroke-linecap="square"/><path d="M1.6 1.6L6.9 6.9M6.9 1.6L1.6 6.9" stroke="#fafafa" stroke-width="1.0"/></svg>
<svg class="a" style="left:261px;top:347px" width="13" height="13" viewBox="0 0 13 13"><path d="M0.5 1.5H5L6 3H10V5H0.5Z" fill="#e8c860" stroke="#b89030" stroke-width="0.8"/><path d="M1.6 3.6H11.4V12.4H1.6Z" fill="#f2f8ff" stroke="#6a8ab0" stroke-width="1"/><text x="3.8" y="11.5" font-family="Liberation Sans" font-size="8" font-weight="bold" fill="#2a5a9a">c</text></svg>
<svg class="a" style="left:574px;top:349px" width="10" height="5" viewBox="0 0 10 5"><rect x="0.7" y="0.7" width="8.3" height="2.8" rx="1" fill="#fff" stroke="#2a2a2a" stroke-width="1.3"/></svg>
<svg class="a" style="left:595px;top:349px" width="10" height="9" viewBox="0 0 10 9"><rect x="0.7" y="0.7" width="8.3" height="7.3" fill="#fff" stroke="#2a2a2a" stroke-width="1.3"/><rect x="1" y="1" width="7.8" height="1.5" fill="#2a2a2a"/></svg>
<svg class="a" style="left:625.5px;top:347px" width="13" height="13" viewBox="0 0 13 13"><rect x="0.6" y="0.6" width="4.5" height="4.5" fill="#cfe0f4" stroke="#3a6aa8" stroke-width="1.1"/><rect x="0.6" y="7.6" width="4.5" height="4.5" fill="#cfe0f4" stroke="#3a6aa8" stroke-width="1.1"/><path d="M5.5 2.8H12.5M7 5.5H12.5M5.5 9.8H12.5" stroke="#6a8ab8" stroke-width="1.2"/></svg>
<svg class="a" style="left:692px;top:349px" width="13" height="10" viewBox="0 0 13 10"><rect x="0" y="0.5" width="13" height="1.6" fill="#3a64a8"/><rect x="0" y="3.5" width="9" height="1.6" fill="#3a64a8"/><rect x="3" y="6.5" width="10" height="1.6" fill="#3a64a8"/><rect x="0" y="6.5" width="2" height="1.6" fill="#3a64a8"/></svg>
<svg class="a" style="left:783px;top:349px" width="9" height="9" viewBox="0 0 9 9"><path d="M1.5 1.5L7 7M7 1.5L1.5 7" stroke="#2a2a2a" stroke-width="2.8" stroke-linecap="square"/><path d="M1.6 1.6L6.9 6.9M6.9 1.6L1.6 6.9" stroke="#fafafa" stroke-width="1.0"/></svg>
<svg class="a" style="left:926px;top:349px" width="10" height="5" viewBox="0 0 10 5"><rect x="0.7" y="0.7" width="8.3" height="2.8" rx="1" fill="#fff" stroke="#2a2a2a" stroke-width="1.3"/></svg>
<svg class="a" style="left:946px;top:349px" width="10" height="9" viewBox="0 0 10 9"><rect x="0.7" y="0.7" width="8.3" height="7.3" fill="#fff" stroke="#2a2a2a" stroke-width="1.3"/><rect x="1" y="1" width="7.8" height="1.5" fill="#2a2a2a"/></svg>
<svg class="a" style="left:804.5px;top:370.5px" width="12" height="13" viewBox="0 0 12 13"><path d="M2.6 0.6H8L11 3.6V12.4H2.6Z" fill="#fff8e0" stroke="#d0b070" stroke-width="1"/><circle cx="4" cy="5" r="3" fill="#f0d070" stroke="#c09a40" stroke-width="0.8"/></svg>
<svg class="a" style="left:825.5px;top:370.5px" width="13" height="13" viewBox="0 0 13 13"><path d="M1 6.5L6.5 1L12 6.5V12.4H1Z" fill="#eaf2ee" stroke="#4a7a6a" stroke-width="1.1"/><rect x="4.5" y="7" width="4" height="5.4" fill="#5a8a7a"/></svg>
<div class="a" style="left:843.5px;top:367.5px;width:19px;height:17.5px;background:#dcdcdc;border:1px solid #b4b4b4;border-radius:4px"></div>
<svg class="a" style="left:846.5px;top:370px" width="13" height="13" viewBox="0 0 13 13"><path d="M1 4L5 1V3H10V5H5V7Z" fill="#f5d860" stroke="#b89030" stroke-width="0.8"/><path d="M12 9L8 6V8H3V10H8V12Z" fill="#f5d860" stroke="#b89030" stroke-width="0.8"/></svg>
<div class="a" style="left:864px;top:367.5px;width:20px;height:17.5px;background:#dcdcdc;border:1px solid #b4b4b4;border-radius:4px"></div>
<svg class="a" style="left:867.5px;top:370px" width="14" height="13" viewBox="0 0 14 13"><path d="M0.6 0.6H8L11 3.6V12.4H0.6Z" fill="#f4f8fc" stroke="#6a7a9a" stroke-width="1"/><text x="2" y="9" font-family="Liberation Mono" font-size="8" font-weight="bold" fill="#3a5aa8">{</text><path d="M6 8H9V6L13 9.5L9 13V11H6Z" fill="#f2d45a" stroke="#b8962e" stroke-width="0.8"/></svg>
<svg class="a" style="left:898.5px;top:370.5px" width="14" height="13" viewBox="0 0 14 13"><rect x="0.6" y="2.6" width="11" height="9.8" fill="#fbf8ea" stroke="#8a8a80" stroke-width="1"/><rect x="0.6" y="2.6" width="11" height="2" fill="#3a6fb0"/><circle cx="11" cy="3" r="2.5" fill="#f5e08a" stroke="#b09a40" stroke-width="0.8"/></svg>
<svg class="a" style="left:920.5px;top:370.5px" width="14" height="13" viewBox="0 0 14 13"><rect x="0.6" y="2.6" width="10" height="9.8" fill="#eef3fa" stroke="#5a7090" stroke-width="1"/><rect x="0.6" y="2.6" width="10" height="2" fill="#3a5a80"/><path d="M6 6L11 1M8.5 1H11.5V4" fill="none" stroke="#4a6a9a" stroke-width="1.3"/></svg>
<svg class="a" style="left:950px;top:372px" width="10" height="6" viewBox="0 0 10 6"><path d="M1 0.8H9L5 5Z" fill="none" stroke="#333" stroke-width="1.3"/></svg>
<svg class="a" style="left:7.5px;top:594px" width="12" height="12" viewBox="0 0 12 12"><rect x="0.7" y="0.7" width="10.6" height="8" rx="1" fill="#dfeaf6" stroke="#3a5a8a" stroke-width="1.3"/><rect x="3" y="3.2" width="6" height="1.5" fill="#3a5a8a"/><rect x="2" y="10" width="8" height="1.6" fill="#3a5a8a"/></svg>
<svg class="a" style="left:75px;top:593.5px" width="13" height="13" viewBox="0 0 13 13"><rect x="3.5" y="1.5" width="9" height="10.5" fill="#fff8e8" stroke="#c9a070" stroke-width="1"/><path d="M0.5 6L4 9.5L9 2" fill="none" stroke="#2a6ab0" stroke-width="1.8"/></svg>
<svg class="a" style="left:129px;top:593.5px" width="12" height="13" viewBox="0 0 12 13"><rect x="0.6" y="0.6" width="10.8" height="11.8" fill="#f6f2ee" stroke="#8a8a9a" stroke-width="1"/><circle cx="6" cy="4" r="2" fill="#c83a2a"/><rect x="3" y="7" width="6" height="5" fill="#d89a3a"/></svg>
<svg class="a" style="left:206.5px;top:593.5px" width="13" height="13" viewBox="0 0 13 13"><circle cx="6.5" cy="6.5" r="6" fill="#6a8ab8" stroke="#4a6a98" stroke-width="0.8"/><path d="M5 3.5L9.5 6.5L5 9.5Z" fill="#fff"/></svg>
<svg class="a" style="left:299px;top:593.5px" width="13" height="13" viewBox="0 0 13 13"><rect x="0.6" y="0.6" width="9" height="9" fill="#dfe8f2" stroke="#3a4a6a" stroke-width="1.2"/><rect x="2.5" y="3" width="5" height="1.2" fill="#3a4a6a"/><path d="M9 7.5V12.5M6.5 10H11.5M7.3 8.3L10.7 11.7M10.7 8.3L7.3 11.7" stroke="#2f7f5f" stroke-width="1.1"/><circle cx="9" cy="10" r="1.8" fill="#8fd8b8"/></svg>
<svg class="a" style="left:423.5px;top:595.5px" width="9" height="9" viewBox="0 0 9 9"><path d="M1.5 1.5L7 7M7 1.5L1.5 7" stroke="#2a2a2a" stroke-width="2.8" stroke-linecap="square"/><path d="M1.6 1.6L6.9 6.9M6.9 1.6L1.6 6.9" stroke="#fafafa" stroke-width="1.0"/></svg>
<svg class="a" style="left:444.5px;top:593.5px" width="9" height="13" viewBox="0 0 9 13"><rect x="0.8" y="0.8" width="7" height="11.5" rx="3" fill="#e6eef8" stroke="#4a6aa8" stroke-width="1.3"/><rect x="3" y="3" width="2.6" height="7" fill="#8aaad8"/></svg>
<svg class="a" style="left:866px;top:594.5px" width="11" height="11" viewBox="0 0 11 11"><rect x="0.6" y="0.6" width="9.8" height="9.8" fill="#e03a3e" stroke="#b02a2e" stroke-width="1"/></svg>
<svg class="a" style="left:887.5px;top:594px" width="12" height="12" viewBox="0 0 12 12"><rect x="0.7" y="0.7" width="10.6" height="8" fill="#dfeaf6" stroke="#3a6aa8" stroke-width="1.3"/><rect x="3" y="3.2" width="4" height="1.4" fill="#3a6aa8"/><rect x="2" y="10" width="8" height="1.6" fill="#3a6aa8"/></svg>
<svg class="a" style="left:907px;top:598px" width="7" height="4" viewBox="0 0 7 4"><path d="M0 0H7L3.5 4Z" fill="#333"/></svg>
<svg class="a" style="left:925.5px;top:596px" width="10" height="5" viewBox="0 0 10 5"><rect x="0.7" y="0.7" width="8.3" height="2.8" rx="1" fill="#fff" stroke="#2a2a2a" stroke-width="1.3"/></svg>
<svg class="a" style="left:946.5px;top:596px" width="10" height="9" viewBox="0 0 10 9"><rect x="0.7" y="0.7" width="8.3" height="7.3" fill="#fff" stroke="#2a2a2a" stroke-width="1.3"/><rect x="1" y="1" width="7.8" height="1.5" fill="#2a2a2a"/></svg>
<div class="t" style="left:437px;top:722.70px;line-height:16px;font-size:13.43px;color:#505050;">Writable</div>
<div class="t" style="left:535px;top:722.70px;line-height:16px;font-size:12.49px;color:#505050;">Smart Insert</div>
<div class="t" style="left:626px;top:722.70px;line-height:16px;font-size:11.12px;color:#505050;">415 : 1</div>
<svg class="a" style="left:709px;top:724px" width="2" height="17" viewBox="0 0 2 17"><rect x="0" y="0.0" width="2" height="2" fill="#b4b4b4"/><rect x="0" y="4.0" width="2" height="2" fill="#b4b4b4"/><rect x="0" y="8.0" width="2" height="2" fill="#b4b4b4"/><rect x="0" y="12.0" width="2" height="2" fill="#b4b4b4"/></svg>
<div class="a" style="left:528px;top:721px;width:1px;height:22px;background:#efefef"></div>
<div class="a" style="left:620px;top:721px;width:1px;height:22px;background:#efefef"></div>
<div class="a" style="left:432px;top:721px;width:1px;height:22px;background:#efefef"></div>
<div class="a" style="left:5px;top:178.5px;width:454px;height:17.3px;background:linear-gradient(#e8693a,#f07a4a)"></div>
<div class="a" style="left:4px;top:103.5px;width:458px;height:232px;overflow:hidden">
<div class="a" style="left:-4px;top:-103.5px;width:972px;height:743px">
<svg class="a" style="left:21.5px;top:97.4px" width="5" height="8" viewBox="0 0 5 8"><path d="M0 0L5 4L0 8Z" fill="#2a2a2a"/></svg>
<svg class="a" style="left:28px;top:94.4px" width="13" height="13" viewBox="0 0 13 13"><rect x="1" y="6" width="2.5" height="6" fill="#e7c34f"/><rect x="4.5" y="6" width="2.5" height="6" fill="#e7c34f"/><circle cx="8.5" cy="5" r="3.6" fill="#f2d56a" stroke="#5a4a1a" stroke-width="1.2"/><circle cx="8.5" cy="5" r="1.2" fill="#5a4a1a"/></svg>
<div class="t" style="left:43.2px;top:93.90px;line-height:16px;font-size:12.00px;color:#3c3c3c;">Thread #2 1073413512 (IDLE) (Suspended : Container)</div>
<svg class="a" style="left:21.5px;top:114.53px" width="5" height="8" viewBox="0 0 5 8"><path d="M0 0L5 4L0 8Z" fill="#2a2a2a"/></svg>
<svg class="a" style="left:28px;top:111.53px" width="13" height="13" viewBox="0 0 13 13"><rect x="1" y="6" width="2.5" height="6" fill="#e7c34f"/><rect x="4.5" y="6" width="2.5" height="6" fill="#e7c34f"/><circle cx="8.5" cy="5" r="3.6" fill="#f2d56a" stroke="#5a4a1a" stroke-width="1.2"/><circle cx="8.5" cy="5" r="1.2" fill="#5a4a1a"/></svg>
<div class="t" style="left:43.2px;top:111.03px;line-height:16px;font-size:12.00px;color:#3c3c3c;">Thread #3 1073413156 (IDLE) (Suspended : Container)</div>
<svg class="a" style="left:21.5px;top:131.66px" width="5" height="8" viewBox="0 0 5 8"><path d="M0 0L5 4L0 8Z" fill="#2a2a2a"/></svg>
<svg class="a" style="left:28px;top:128.66px" width="13" height="13" viewBox="0 0 13 13"><rect x="1" y="6" width="2.5" height="6" fill="#e7c34f"/><rect x="4.5" y="6" width="2.5" height="6" fill="#e7c34f"/><circle cx="8.5" cy="5" r="3.6" fill="#f2d56a" stroke="#5a4a1a" stroke-width="1.2"/><circle cx="8.5" cy="5" r="1.2" fill="#5a4a1a"/></svg>
<div class="t" style="left:43.2px;top:128.16px;line-height:16px;font-size:12.00px;color:#3c3c3c;">Thread #4 1073432224 (dport) (Suspended : Container)</div>
<svg class="a" style="left:20px;top:149.79000000000002px" width="8" height="5" viewBox="0 0 8 5"><path d="M0 0H7L3.5 5Z" fill="#2a2a2a"/></svg>
<svg class="a" style="left:28px;top:145.79000000000002px" width="13" height="13" viewBox="0 0 13 13"><rect x="1" y="6" width="2.5" height="6" fill="#e7c34f"/><rect x="4.5" y="6" width="2.5" height="6" fill="#e7c34f"/><circle cx="8.5" cy="5" r="3.6" fill="#f2d56a" stroke="#5a4a1a" stroke-width="1.2"/><circle cx="8.5" cy="5" r="1.2" fill="#5a4a1a"/></svg>
<div class="t" style="left:43.2px;top:145.29px;line-height:16px;font-size:12.00px;color:#3c3c3c;">Thread #5 1073410208 (ipc1 : Running) (Suspended : Container)</div>
<svg class="a" style="left:21.5px;top:320.09000000000003px" width="5" height="8" viewBox="0 0 5 8"><path d="M0 0L5 4L0 8Z" fill="#2a2a2a"/></svg>
<svg class="a" style="left:28px;top:317.09000000000003px" width="13" height="13" viewBox="0 0 13 13"><rect x="1" y="6" width="2.5" height="6" fill="#e7c34f"/><rect x="4.5" y="6" width="2.5" height="6" fill="#e7c34f"/><circle cx="8.5" cy="5" r="3.6" fill="#f2d56a" stroke="#5a4a1a" stroke-width="1.2"/><circle cx="8.5" cy="5" r="1.2" fill="#5a4a1a"/></svg>
<div class="t" style="left:43.2px;top:316.59px;line-height:16px;font-size:12.00px;color:#3c3c3c;">Thread #6 1073431096 (Tmr Svc) (Suspended : Container)</div>
<svg class="a" style="left:37px;top:163.92000000000002px" width="10" height="10" viewBox="0 0 10 10"><rect x="0" y="0.6" width="10" height="8.6" fill="#d6e8f8"/><rect x="0" y="0.7" width="10" height="1.8" fill="#2f5a94"/><rect x="0" y="4" width="10" height="1.8" fill="#2f5a94"/><rect x="0" y="7.3" width="10" height="1.8" fill="#2f5a94"/></svg>
<div class="t" style="left:50px;top:162.52px;line-height:16px;font-size:12.15px;color:#3c3c3c;">0x4000bfea</div>
<svg class="a" style="left:37px;top:181.05px" width="10" height="10" viewBox="0 0 10 10"><rect x="0" y="0.6" width="10" height="8.6" fill="#d6e8f8"/><rect x="0" y="0.7" width="10" height="1.8" fill="#2f5a94"/><rect x="0" y="4" width="10" height="1.8" fill="#2f5a94"/><rect x="0" y="7.3" width="10" height="1.8" fill="#2f5a94"/></svg>
<div class="t" style="left:50px;top:179.65px;line-height:16px;font-size:12.18px;color:#fff4e0;">vPortCPUReleaseMutex() at port.c:415 0x40083a85</div>
<svg class="a" style="left:37px;top:198.18px" width="10" height="10" viewBox="0 0 10 10"><rect x="0" y="0.6" width="10" height="8.6" fill="#d6e8f8"/><rect x="0" y="0.7" width="10" height="1.8" fill="#2f5a94"/><rect x="0" y="4" width="10" height="1.8" fill="#2f5a94"/><rect x="0" y="7.3" width="10" height="1.8" fill="#2f5a94"/></svg>
<div class="t" style="left:50px;top:196.78px;line-height:16px;font-size:12.31px;color:#3c3c3c;">vTaskSwitchContext() at tasks.c:2,846 0x40083fc8</div>
<svg class="a" style="left:37px;top:215.31px" width="10" height="10" viewBox="0 0 10 10"><rect x="0" y="0.6" width="10" height="8.6" fill="#d6e8f8"/><rect x="0" y="0.7" width="10" height="1.8" fill="#2f5a94"/><rect x="0" y="4" width="10" height="1.8" fill="#2f5a94"/><rect x="0" y="7.3" width="10" height="1.8" fill="#2f5a94"/></svg>
<div class="t" style="left:50px;top:213.91px;line-height:16px;font-size:12.43px;color:#3c3c3c;">_frxt_dispatch() at 0x4008532b</div>
<svg class="a" style="left:37px;top:232.44px" width="10" height="10" viewBox="0 0 10 10"><rect x="0" y="0.6" width="10" height="8.6" fill="#d6e8f8"/><rect x="0" y="0.7" width="10" height="1.8" fill="#2f5a94"/><rect x="0" y="4" width="10" height="1.8" fill="#2f5a94"/><rect x="0" y="7.3" width="10" height="1.8" fill="#2f5a94"/></svg>
<div class="t" style="left:50px;top:231.04px;line-height:16px;font-size:12.45px;color:#3c3c3c;">xPortStartScheduler() at port.c:222 0x4008395c</div>
<svg class="a" style="left:37px;top:249.57px" width="10" height="10" viewBox="0 0 10 10"><rect x="0" y="0.6" width="10" height="8.6" fill="#d6e8f8"/><rect x="0" y="0.7" width="10" height="1.8" fill="#2f5a94"/><rect x="0" y="4" width="10" height="1.8" fill="#2f5a94"/><rect x="0" y="7.3" width="10" height="1.8" fill="#2f5a94"/></svg>
<div class="t" style="left:50px;top:248.17px;line-height:16px;font-size:11.84px;color:#3c3c3c;">0x4000000c</div>
<svg class="a" style="left:37px;top:266.7px" width="10" height="10" viewBox="0 0 10 10"><rect x="0" y="0.6" width="10" height="8.6" fill="#d6e8f8"/><rect x="0" y="0.7" width="10" height="1.8" fill="#2f5a94"/><rect x="0" y="4" width="10" height="1.8" fill="#2f5a94"/><rect x="0" y="7.3" width="10" height="1.8" fill="#2f5a94"/></svg>
<div class="t" style="left:50px;top:265.30px;line-height:16px;font-size:11.84px;color:#3c3c3c;">0x4000000c</div>
<svg class="a" style="left:37px;top:283.83px" width="10" height="10" viewBox="0 0 10 10"><rect x="0" y="0.6" width="10" height="8.6" fill="#d6e8f8"/><rect x="0" y="0.7" width="10" height="1.8" fill="#2f5a94"/><rect x="0" y="4" width="10" height="1.8" fill="#2f5a94"/><rect x="0" y="7.3" width="10" height="1.8" fill="#2f5a94"/></svg>
<div class="t" style="left:50px;top:282.43px;line-height:16px;font-size:11.84px;color:#3c3c3c;">0x4000000c</div>
<svg class="a" style="left:37px;top:300.96000000000004px" width="10" height="10" viewBox="0 0 10 10"><rect x="0" y="0.6" width="10" height="8.6" fill="#d6e8f8"/><rect x="0" y="0.7" width="10" height="1.8" fill="#2f5a94"/><rect x="0" y="4" width="10" height="1.8" fill="#2f5a94"/><rect x="0" y="7.3" width="10" height="1.8" fill="#2f5a94"/></svg>
<div class="t" style="left:50px;top:299.56px;line-height:16px;font-size:11.84px;color:#3c3c3c;">0x4000000c</div>
</div></div>
<div class="a" style="left:458px;top:163px;width:2px;height:140px;background:#e98a62"></div>
<div class="a" style="left:4px;top:364px;width:600px;height:219px;overflow:hidden">
<div class="a" style="left:-4px;top:-364px;width:972px;height:743px">
<div class="a" style="left:5px;top:364px;width:10px;height:137.5px;background:#f3b59a"></div>
<div class="a" style="left:44.4px;top:366.67px;width:560px;height:36.78px;background:#e1e1e1"></div>
<div class="a" style="left:44.4px;top:452.49px;width:560px;height:36.78px;background:#e1e1e1"></div>
<div class="a" style="left:44.4px;top:513.7900000000001px;width:560px;height:61.3px;background:#e1e1e1"></div>
<div class="a" style="left:44.4px;top:427.97px;width:560px;height:12.26px;background:#e8f2fe"></div>
<div class="a" style="left:44.4px;top:427.97px;width:262px;height:12.26px;background:#d9edcb"></div>
<div class="a" style="left:604px;top:364px;width:13px;height:219px;background:#f8f8f8"></div>
<div class="m" style="left:15.5px;top:366.67px;line-height:12.26px;font-size:11.4px;letter-spacing:-0.321px;color:#6a6a6a;">410</div>
<div class="m" style="left:44.4px;top:366.67px;line-height:12.26px;font-size:11.4px;letter-spacing:-0.321px;color:#000;">        ets_printf(<span class="s">"Last non-recursive lock %s line %d\n"</span>, mux-&gt;Fn, mux-&gt;lastLockedLine);</div>
<div class="m" style="left:15.5px;top:378.93px;line-height:12.26px;font-size:11.4px;letter-spacing:-0.321px;color:#6a6a6a;">411</div>
<div class="m" style="left:44.4px;top:378.93px;line-height:12.26px;font-size:11.4px;letter-spacing:-0.321px;color:#000;">        ets_printf(<span class="s">"Called by %s line %d\n"</span>, fnName, line);</div>
<div class="m" style="left:15.5px;top:391.19px;line-height:12.26px;font-size:11.4px;letter-spacing:-0.321px;color:#6a6a6a;">412</div>
<div class="m" style="left:44.4px;top:391.19px;line-height:12.26px;font-size:11.4px;letter-spacing:-0.321px;color:#000;"><span class="k">#endif</span></div>
<div class="m" style="left:15.5px;top:403.45px;line-height:12.26px;font-size:11.4px;letter-spacing:-0.321px;color:#6a6a6a;">413</div>
<div class="m" style="left:44.4px;top:403.45px;line-height:12.26px;font-size:11.4px;letter-spacing:-0.321px;color:#000;">        ret=pdFALSE;</div>
<div class="m" style="left:15.5px;top:415.71px;line-height:12.26px;font-size:11.4px;letter-spacing:-0.321px;color:#6a6a6a;">414</div>
<div class="m" style="left:44.4px;top:415.71px;line-height:12.26px;font-size:11.4px;letter-spacing:-0.321px;color:#000;">    }</div>
<div class="m" style="left:15.5px;top:427.97px;line-height:12.26px;font-size:11.4px;letter-spacing:-0.321px;color:#6a6a6a;">415</div>
<div class="m" style="left:44.4px;top:427.97px;line-height:12.26px;font-size:11.4px;letter-spacing:-0.321px;color:#000;">    portEXIT_CRITICAL_NESTED(irqStatus);</div>
<div class="m" style="left:15.5px;top:440.23px;line-height:12.26px;font-size:11.4px;letter-spacing:-0.321px;color:#6a6a6a;">416</div>
<div class="m" style="left:44.4px;top:440.23px;line-height:12.26px;font-size:11.4px;letter-spacing:-0.321px;color:#000;">    <span class="k">return</span> ret;</div>
<div class="m" style="left:15.5px;top:452.49px;line-height:12.26px;font-size:11.4px;letter-spacing:-0.321px;color:#6a6a6a;">417</div>
<div class="m" style="left:44.4px;top:452.49px;line-height:12.26px;font-size:11.4px;letter-spacing:-0.321px;color:#000;"><span class="k">#else</span> <span class="cm">//!CONFIG_FREERTOS_UNICORE</span></div>
<div class="m" style="left:15.5px;top:464.75px;line-height:12.26px;font-size:11.4px;letter-spacing:-0.321px;color:#6a6a6a;">418</div>
<div class="m" style="left:44.4px;top:464.75px;line-height:12.26px;font-size:11.4px;letter-spacing:-0.321px;color:#000;">    <span class="k">return</span> 0;</div>
<div class="m" style="left:15.5px;top:477.01px;line-height:12.26px;font-size:11.4px;letter-spacing:-0.321px;color:#6a6a6a;">419</div>
<div class="m" style="left:44.4px;top:477.01px;line-height:12.26px;font-size:11.4px;letter-spacing:-0.321px;color:#000;"><span class="k">#endif</span></div>
<div class="m" style="left:15.5px;top:489.27px;line-height:12.26px;font-size:11.4px;letter-spacing:-0.321px;color:#6a6a6a;">420</div>
<div class="m" style="left:44.4px;top:489.27px;line-height:12.26px;font-size:11.4px;letter-spacing:-0.321px;color:#000;">}</div>
<div class="m" style="left:15.5px;top:501.53px;line-height:12.26px;font-size:11.4px;letter-spacing:-0.321px;color:#6a6a6a;">421</div>
<div class="m" style="left:44.4px;top:501.53px;line-height:12.26px;font-size:11.4px;letter-spacing:-0.321px;color:#000;"></div>
<div class="m" style="left:15.5px;top:513.79px;line-height:12.26px;font-size:11.4px;letter-spacing:-0.321px;color:#6a6a6a;">422</div>
<div class="m" style="left:44.4px;top:513.79px;line-height:12.26px;font-size:11.4px;letter-spacing:-0.321px;color:#000;"><span class="k">#if</span> CONFIG_FREERTOS_BREAK_ON_SCHEDULER_START_JTAG</div>
<div class="m" style="left:15.5px;top:526.05px;line-height:12.26px;font-size:11.4px;letter-spacing:-0.321px;color:#6a6a6a;">423</div>
<div class="m" style="left:44.4px;top:526.05px;line-height:12.26px;font-size:11.4px;letter-spacing:-0.321px;color:#000;"><span class="k">void</span> vPortFirstTaskHook(TaskFunction_t function) {</div>
<div class="m" style="left:15.5px;top:538.31px;line-height:12.26px;font-size:11.4px;letter-spacing:-0.321px;color:#6a6a6a;">424</div>
<div class="m" style="left:44.4px;top:538.31px;line-height:12.26px;font-size:11.4px;letter-spacing:-0.321px;color:#000;">    esp_set_breakpoint_if_jtag(function);</div>
<div class="m" style="left:15.5px;top:550.57px;line-height:12.26px;font-size:11.4px;letter-spacing:-0.321px;color:#6a6a6a;">425</div>
<div class="m" style="left:44.4px;top:550.57px;line-height:12.26px;font-size:11.4px;letter-spacing:-0.321px;color:#000;">}</div>
<div class="m" style="left:15.5px;top:562.83px;line-height:12.26px;font-size:11.4px;letter-spacing:-0.321px;color:#6a6a6a;">426</div>
<div class="m" style="left:44.4px;top:562.83px;line-height:12.26px;font-size:11.4px;letter-spacing:-0.321px;color:#000;"><span class="k">#endif</span></div>
<svg class="a" style="left:35px;top:528.6800000000001px" width="7" height="7" viewBox="0 0 7 7"><circle cx="3.5" cy="3.5" r="3" fill="#fff" stroke="#8aa0c0" stroke-width="0.9"/><path d="M1.8 3.5H5.2" stroke="#5a78a8" stroke-width="0.9"/></svg>
<svg class="a" style="left:1px;top:430.1px" width="9" height="8" viewBox="0 0 9 8"><path d="M0.7 2.5H4V0.8L8 4L4 7.2V5.5H0.7Z" fill="#dbe9f7" stroke="#4a78b0" stroke-width="1"/></svg>
</div></div>
<div class="a" style="left:622px;top:389px;width:336px;height:191px;overflow:hidden">
<div class="a" style="left:-622px;top:-389px;width:972px;height:743px">
<div class="a" style="left:701.5px;top:451.225px;width:256px;height:12.25px;background:#e8f2fe"></div>
<div class="a" style="left:701.5px;top:451.225px;width:65.5px;height:12.25px;background:#d9edcb"></div>
<div class="a" style="left:958px;top:389px;width:11px;height:194px;background:#f8f8f8"></div>
<div class="m" style="left:634px;top:389.97px;line-height:12.26px;font-size:11.4px;letter-spacing:-0.321px;color:#3f7f3f;">40083a7d:</div>
<div class="m" style="left:702px;top:389.97px;line-height:12.26px;font-size:11.4px;letter-spacing:-0.321px;color:#000;">  <span style="color:#2a2a62">movi.n  a2, 1</span></div>
<div class="m" style="left:634px;top:402.22px;line-height:12.26px;font-size:11.4px;letter-spacing:-0.321px;color:#3f7f3f;">415</div>
<div class="m" style="left:702px;top:402.22px;line-height:12.26px;font-size:11.4px;letter-spacing:-0.321px;color:#000;">    portEXIT_CRITICAL_NESTED(irqStatus)</div>
<div class="m" style="left:634px;top:414.47px;line-height:12.26px;font-size:11.4px;letter-spacing:-0.321px;color:#3f7f3f;">40083a7f:</div>
<div class="m" style="left:702px;top:414.47px;line-height:12.26px;font-size:11.4px;letter-spacing:-0.321px;color:#000;">  <span style="color:#2a2a62">l32r    a8, 0x40080544</span></div>
<div class="m" style="left:634px;top:426.72px;line-height:12.26px;font-size:11.4px;letter-spacing:-0.321px;color:#3f7f3f;">40083a82:</div>
<div class="m" style="left:702px;top:426.72px;line-height:12.26px;font-size:11.4px;letter-spacing:-0.321px;color:#000;">  <span style="color:#2a2a62">callx8  a8</span></div>
<div class="m" style="left:634px;top:438.97px;line-height:12.26px;font-size:11.4px;letter-spacing:-0.321px;color:#3f7f3f;">420</div>
<div class="m" style="left:702px;top:438.97px;line-height:12.26px;font-size:11.4px;letter-spacing:-0.321px;color:#000;">}</div>
<div class="m" style="left:634px;top:451.22px;line-height:12.26px;font-size:11.4px;letter-spacing:-0.321px;color:#3f7f3f;">40083a85:</div>
<div class="m" style="left:702px;top:451.22px;line-height:12.26px;font-size:11.4px;letter-spacing:-0.321px;color:#000;">  <span style="color:#2a2a62">retw.n</span></div>
<div class="m" style="left:634px;top:463.47px;line-height:12.26px;font-size:11.4px;letter-spacing:-0.321px;color:#3f7f3f;">40083a87:</div>
<div class="m" style="left:702px;top:463.47px;line-height:12.26px;font-size:11.4px;letter-spacing:-0.321px;color:#000;">  <span style="color:#2a2a62">srli    a3, a0, 6</span></div>
<div class="m" style="left:634px;top:475.72px;line-height:12.26px;font-size:11.4px;letter-spacing:-0.321px;color:#3f7f3f;">452</div>
<div class="m" style="left:702px;top:475.72px;line-height:12.26px;font-size:11.4px;letter-spacing:-0.321px;color:#000;">{</div>
<div class="m" style="left:702px;top:487.97px;line-height:12.26px;font-size:11.4px;letter-spacing:-0.321px;color:#000;"><span style="color:#1a1a5a;font-weight:bold">pvPortMalloc:</span></div>
<div class="m" style="left:634px;top:500.22px;line-height:12.26px;font-size:11.4px;letter-spacing:-0.321px;color:#3f7f3f;">40083a88:</div>
<div class="m" style="left:702px;top:500.22px;line-height:12.26px;font-size:11.4px;letter-spacing:-0.321px;color:#000;">  <span style="color:#2a2a62">entry   a1, 32</span></div>
<div class="m" style="left:634px;top:512.47px;line-height:12.26px;font-size:11.4px;letter-spacing:-0.321px;color:#3f7f3f;">453</div>
<div class="m" style="left:702px;top:512.47px;line-height:12.26px;font-size:11.4px;letter-spacing:-0.321px;color:#000;">    <span class="k">return</span> heap_caps_malloc(xWantedSize);</div>
<div class="m" style="left:634px;top:524.72px;line-height:12.26px;font-size:11.4px;letter-spacing:-0.321px;color:#3f7f3f;">40083a8b:</div>
<div class="m" style="left:702px;top:524.72px;line-height:12.26px;font-size:11.4px;letter-spacing:-0.321px;color:#000;">  <span style="color:#2a2a62">movi    a11, 4</span></div>
<div class="m" style="left:634px;top:536.97px;line-height:12.26px;font-size:11.4px;letter-spacing:-0.321px;color:#3f7f3f;">40083a8e:</div>
<div class="m" style="left:702px;top:536.97px;line-height:12.26px;font-size:11.4px;letter-spacing:-0.321px;color:#000;">  <span style="color:#2a2a62">or      a10, a2, a2</span></div>
<div class="m" style="left:634px;top:549.22px;line-height:12.26px;font-size:11.4px;letter-spacing:-0.321px;color:#3f7f3f;">40083a91:</div>
<div class="m" style="left:702px;top:549.22px;line-height:12.26px;font-size:11.4px;letter-spacing:-0.321px;color:#000;">  <span style="color:#2a2a62">call8   0x40081b20 &lt;heap_caps_malloc&gt;</span></div>
<div class="m" style="left:634px;top:561.47px;line-height:12.26px;font-size:11.4px;letter-spacing:-0.321px;color:#3f7f3f;">454</div>
<div class="m" style="left:702px;top:561.47px;line-height:12.26px;font-size:11.4px;letter-spacing:-0.321px;color:#000;">}</div>
<div class="m" style="left:702px;top:573.72px;line-height:12.26px;font-size:11.4px;letter-spacing:-0.321px;color:#000;">  <span style="color:#2a2a62">or      a2, a10, a10</span></div>
<svg class="a" style="left:622px;top:453.35px" width="9" height="8" viewBox="0 0 9 8"><path d="M0.7 2.5H4V0.8L8 4L4 7.2V5.5H0.7Z" fill="#dbe9f7" stroke="#4a78b0" stroke-width="1"/></svg>
</div></div>
<div class="a" style="left:4px;top:627px;width:965px;height:90px;overflow:hidden">
<div class="a" style="left:-4px;top:-627px;width:972px;height:743px">
<div class="m" style="left:7.5px;top:624.35px;line-height:12.3px;font-size:11.4px;letter-spacing:-0.321px;color:#000;">[New Thread 1073408744]</div>
<div class="m" style="left:7.5px;top:636.65px;line-height:12.3px;font-size:11.4px;letter-spacing:-0.321px;color:#000;">[New Thread 1073411336]</div>
<div class="m" style="left:7.5px;top:648.95px;line-height:12.3px;font-size:11.4px;letter-spacing:-0.321px;color:#000;">[Switching to Thread 1073411772]</div>
<div class="m" style="left:7.5px;top:661.25px;line-height:12.3px;font-size:11.4px;letter-spacing:-0.321px;color:#000;"></div>
<div class="m" style="left:7.5px;top:673.55px;line-height:12.3px;font-size:11.4px;letter-spacing:-0.321px;color:#000;">Temporary breakpoint 1, app_main () at /home/krzysztof/esp/blink/main/./blink.c:43</div>
<div class="m" style="left:7.5px;top:685.85px;line-height:12.3px;font-size:11.4px;letter-spacing:-0.321px;color:#000;">43          xTaskCreate(&amp;blink_task, "blink_task", configMINIMAL_STACK_SIZE, NULL, 5, NULL);</div>
</div></div>
<div class="a" style="left:28.5px;top:160px;width:314.5px;height:158px;border:3px solid #6aa84f"></div>
<svg class="a" style="left:256px;top:229px" width="410" height="101"><g transform="translate(90,0)"><rect x="10.5" y="10.5" width="109" height="60" rx="9" fill="#6aa943" stroke="#4e8630" stroke-width="1.5"/><polygon points="11.0,20.0 -15.3,31.0 11.0,36.0" fill="#6aa943" stroke="#4e8630" stroke-width="1.5" stroke-linejoin="round"/><rect x="11.5" y="11.5" width="107" height="58" rx="8" fill="#6aa943"/><polygon points="11.0,20.0 -15.3,31.0 11.0,36.0" fill="#6aa943"/></g></svg>
<div class="t" style="left:356px;width:110px;text-align:center;top:248.60000000000002px;line-height:22px;font-size:17px;color:#eef6e0;-webkit-text-stroke:0">Function</div>
<div class="t" style="left:356px;width:110px;text-align:center;top:270.9px;line-height:22px;font-size:17px;color:#eef6e0;-webkit-text-stroke:0">call stack</div>
<svg class="a" style="left:298px;top:357px" width="463" height="102"><g transform="translate(90,0)"><rect x="10.5" y="10.5" width="162" height="61" rx="9" fill="#6aa943" stroke="#4e8630" stroke-width="1.5"/><polygon points="11.0,46.0 -78.0,76.0 11.0,63.5" fill="#6aa943" stroke="#4e8630" stroke-width="1.5" stroke-linejoin="round"/><rect x="11.5" y="11.5" width="160" height="59" rx="8" fill="#6aa943"/><polygon points="11.0,46.0 -78.0,76.0 11.0,63.5" fill="#6aa943"/></g></svg>
<div class="t" style="left:400px;width:163px;text-align:center;top:377px;line-height:22px;font-size:17.3px;color:#eef6e0;-webkit-text-stroke:0">Halt line</div>
<div class="t" style="left:400px;width:163px;text-align:center;top:399.4px;line-height:22px;font-size:17.3px;color:#eef6e0;-webkit-text-stroke:0">in source code</div>
<svg class="a" style="left:298px;top:428.4px" width="463" height="102"><g transform="translate(90,0)"><rect x="10.5" y="10.5" width="162" height="61" rx="9" fill="#6aa943" stroke="#4e8630" stroke-width="1.5"/><polygon points="172.0,20.3 238.3,28.1 172.0,35.9" fill="#6aa943" stroke="#4e8630" stroke-width="1.5" stroke-linejoin="round"/><rect x="11.5" y="11.5" width="160" height="59" rx="8" fill="#6aa943"/><polygon points="172.0,20.3 238.3,28.1 172.0,35.9" fill="#6aa943"/></g></svg>
<div class="t" style="left:400px;width:163px;text-align:center;top:447px;line-height:22px;font-size:17.3px;color:#eef6e0;-webkit-text-stroke:0">Halt line</div>
<div class="t" style="left:400px;width:163px;text-align:center;top:470px;line-height:22px;font-size:17.3px;color:#eef6e0;-webkit-text-stroke:0">in machine code</div>
</body></html>
